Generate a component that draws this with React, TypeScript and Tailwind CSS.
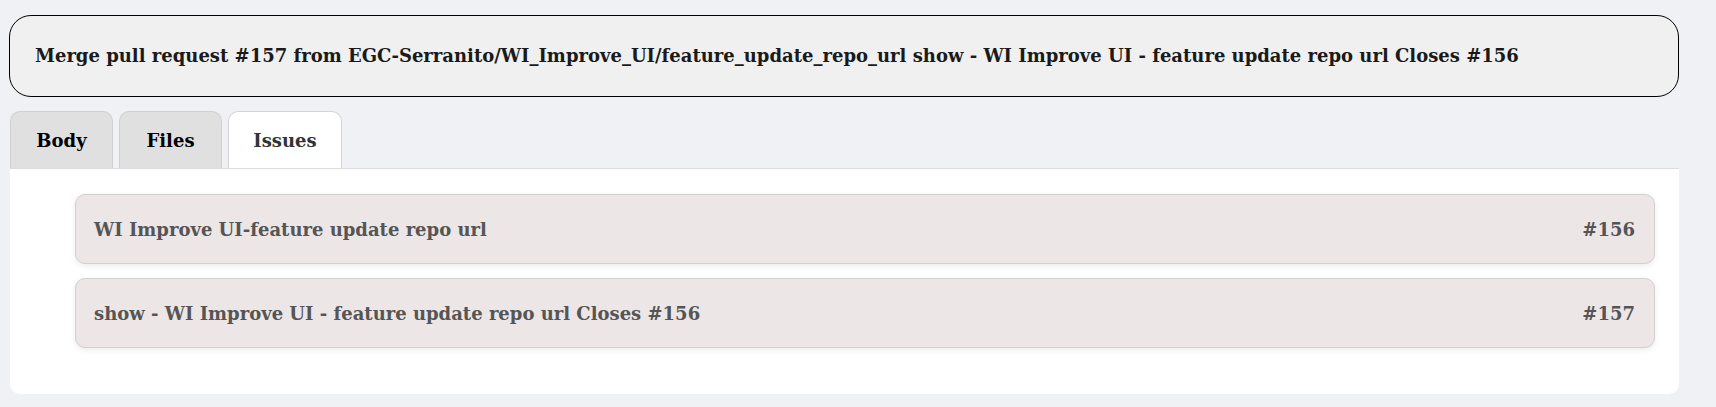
import React from "react";

const issues = [
  { title: "WI Improve UI-feature update repo url", number: "#156" },
  { title: "show - WI Improve UI - feature update repo url Closes #156", number: "#157" },
];

const tabs = ["Body", "Files", "Issues"];

export default function App() {
  const active = "Issues";
  return (
    <div
      className="min-h-[407px] bg-[#f0f1f5] pl-[9px] pr-[37px] pt-[15px] pb-[14px]"
      style={{ fontFamily: '"DejaVu Serif", "Liberation Serif", serif' }}
    >
      {/* commit message */}
      <div className="h-[82px] flex items-center rounded-[22px] border border-black bg-[#f0f0f0] px-[25px]">
        <h1 className="text-[18px] leading-[22px] font-bold text-[#1a1a1a] whitespace-nowrap">
          Merge pull request #157 from EGC-Serranito/WI_Improve_UI/feature_update_repo_url show - WI Improve UI - feature update repo url Closes #156
        </h1>
      </div>

      {/* tabs */}
      <div className="mt-[14px] ml-[1px] flex gap-[6px] items-end">
        {tabs.map((t) => (
          <button
            key={t}
            className={
              t === active
                ? "h-[57px] w-[114px] rounded-t-[10px] border border-b-0 border-[#d4d4d4] bg-white text-[18px] font-bold text-[#333]"
                : "h-[57px] w-[103px] rounded-t-[10px] border border-b-0 border-[#d0d0d0] bg-[#e0e0e0] text-[18px] font-bold text-black"
            }
          >
            {t}
          </button>
        ))}
      </div>

      {/* panel */}
      <div className="ml-[1px] border-t border-[#dddddd] bg-white rounded-b-[10px] pl-[65px] pr-[24px] pt-[25px] pb-[46px] flex flex-col gap-[14px]">
        {issues.map((i) => (
          <div
            key={i.number}
            className="h-[70px] flex items-center justify-between rounded-[10px] border border-[#d2d0d0] bg-[#ece6e6] pl-[18px] pr-[19px] shadow-[0_2px_6px_rgba(0,0,0,0.08)]"
          >
            <span className="text-[18px] font-bold text-[#555]">{i.title}</span>
            <span className="text-[18px] font-bold text-[#555]">{i.number}</span>
          </div>
        ))}
      </div>
    </div>
  );
}
